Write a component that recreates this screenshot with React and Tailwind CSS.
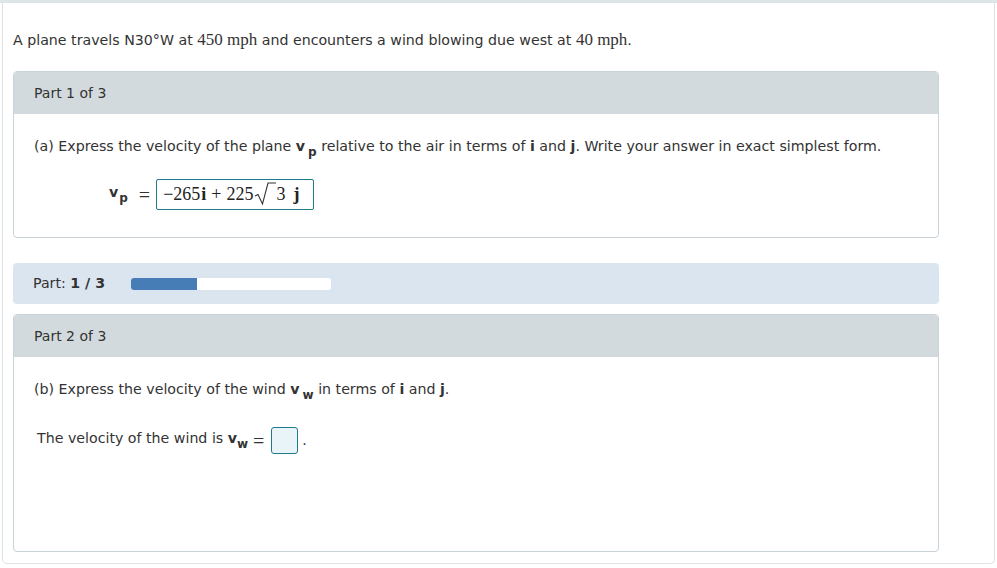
import React from "react";

const sans = { fontFamily: '"DejaVu Sans", Verdana, sans-serif' };
const serif = { fontFamily: '"Liberation Serif", "Times New Roman", serif' };

function Vec({ sub, gap = "ml-[3px]" }) {
  return (
    <span className="font-bold">
      v<sub className={`text-[12px] relative top-[5px] align-baseline ${gap}`}>{sub}</sub>
    </span>
  );
}

function PartHeader({ children }) {
  return (
    <div className="h-[42px] bg-[#d2dadd] rounded-t-[4px] flex items-center px-[20px] text-[14px] text-[#333]">
      {children}
    </div>
  );
}

export default function App() {
  return (
    <div className="w-[997px] h-[568px] bg-white text-[#333]" style={sans}>
      <div className="h-[3px] bg-[#dde5e8]" />
      <div className="mx-[2px] h-[561px] border border-t-0 border-[#dfe3e5] rounded-b-[5px] px-[10px]">
        <div className="pt-[24px] h-[68px] text-[14.2px]">
          A plane travels N30°W at <span style={serif} className="text-[17px]">450 mph</span> and encounters a wind blowing due west at{" "}
          <span style={serif} className="text-[17px]">40 mph</span>.
        </div>

        <div className="w-[926px] h-[167px] border border-[#c9d3d7] rounded-[4px] flex flex-col">
          <PartHeader>Part 1 of 3</PartHeader>
          <div className="px-[20px] pt-[22px] text-[14.2px]">
            (a) Express the velocity of the plane <Vec sub="p" /> relative to the air in terms of{" "}
            <span className="font-bold">i</span> and <span className="font-bold">j</span>. Write your answer in exact simplest form.
          </div>
          <div className="flex items-center mt-[22px] ml-[95px]">
            <span className="text-[14.2px] -mt-[4px]">
              <Vec sub="p" gap="ml-[1px]" />
            </span>
            <span className="ml-[11px] text-[20px] leading-none" style={serif}>=</span>
            <div
              className="ml-[6px] h-[31px] w-[158px] border border-[#1f7a8a] rounded-[2px] flex items-center pl-[6px] text-[18px] text-[#222]"
              style={serif}
            >
              −265<span className="font-bold ml-[1px]">i</span>
              <span className="mx-[5px]">+</span>225
              <svg width="22" height="26" viewBox="0 0 22 26" className="ml-[1px] -mt-[1px]">
                <path d="M1 15 L4 13.5 L8.5 23 L14 2 L22 2" fill="none" stroke="#333" strokeWidth="1.1" />
              </svg>
              <span>3</span>
              <span className="font-bold ml-[8px]">j</span>
            </div>
          </div>
        </div>

        <div className="w-[926px] h-[41px] mt-[25px] bg-[#dae5ef] rounded-[4px] flex items-center px-[20px] text-[14.2px]">
          <span>
            Part: <span className="font-bold">1 / 3</span>
          </span>
          <div className="ml-[26px] w-[200px] h-[12px] bg-white rounded-[3px] overflow-hidden">
            <div className="h-full w-[66px] bg-[#477db6]" />
          </div>
        </div>

        <div className="w-[926px] h-[238px] mt-[10px] border border-[#c9d3d7] rounded-[4px] flex flex-col">
          <PartHeader>Part 2 of 3</PartHeader>
          <div className="px-[20px] pt-[22px] text-[14.2px]">
            (b) Express the velocity of the wind <Vec sub="w" /> in terms of <span className="font-bold">i</span> and{" "}
            <span className="font-bold">j</span>.
          </div>
          <div className="flex items-center mt-[27px] ml-[23px] text-[14.2px]">
            <span className="-mt-[4px]">
              The velocity of the wind is <Vec sub="w" gap="ml-[0px]" />
            </span>
            <span className="ml-[5px] text-[20px] leading-none" style={serif}>=</span>
            <div className="ml-[7px] w-[27px] h-[27px] bg-[#e8f4f8] border border-[#1f7a8a] rounded-[3px]" />
            <span className="ml-[4px]">.</span>
          </div>
        </div>
      </div>
    </div>
  );
}
